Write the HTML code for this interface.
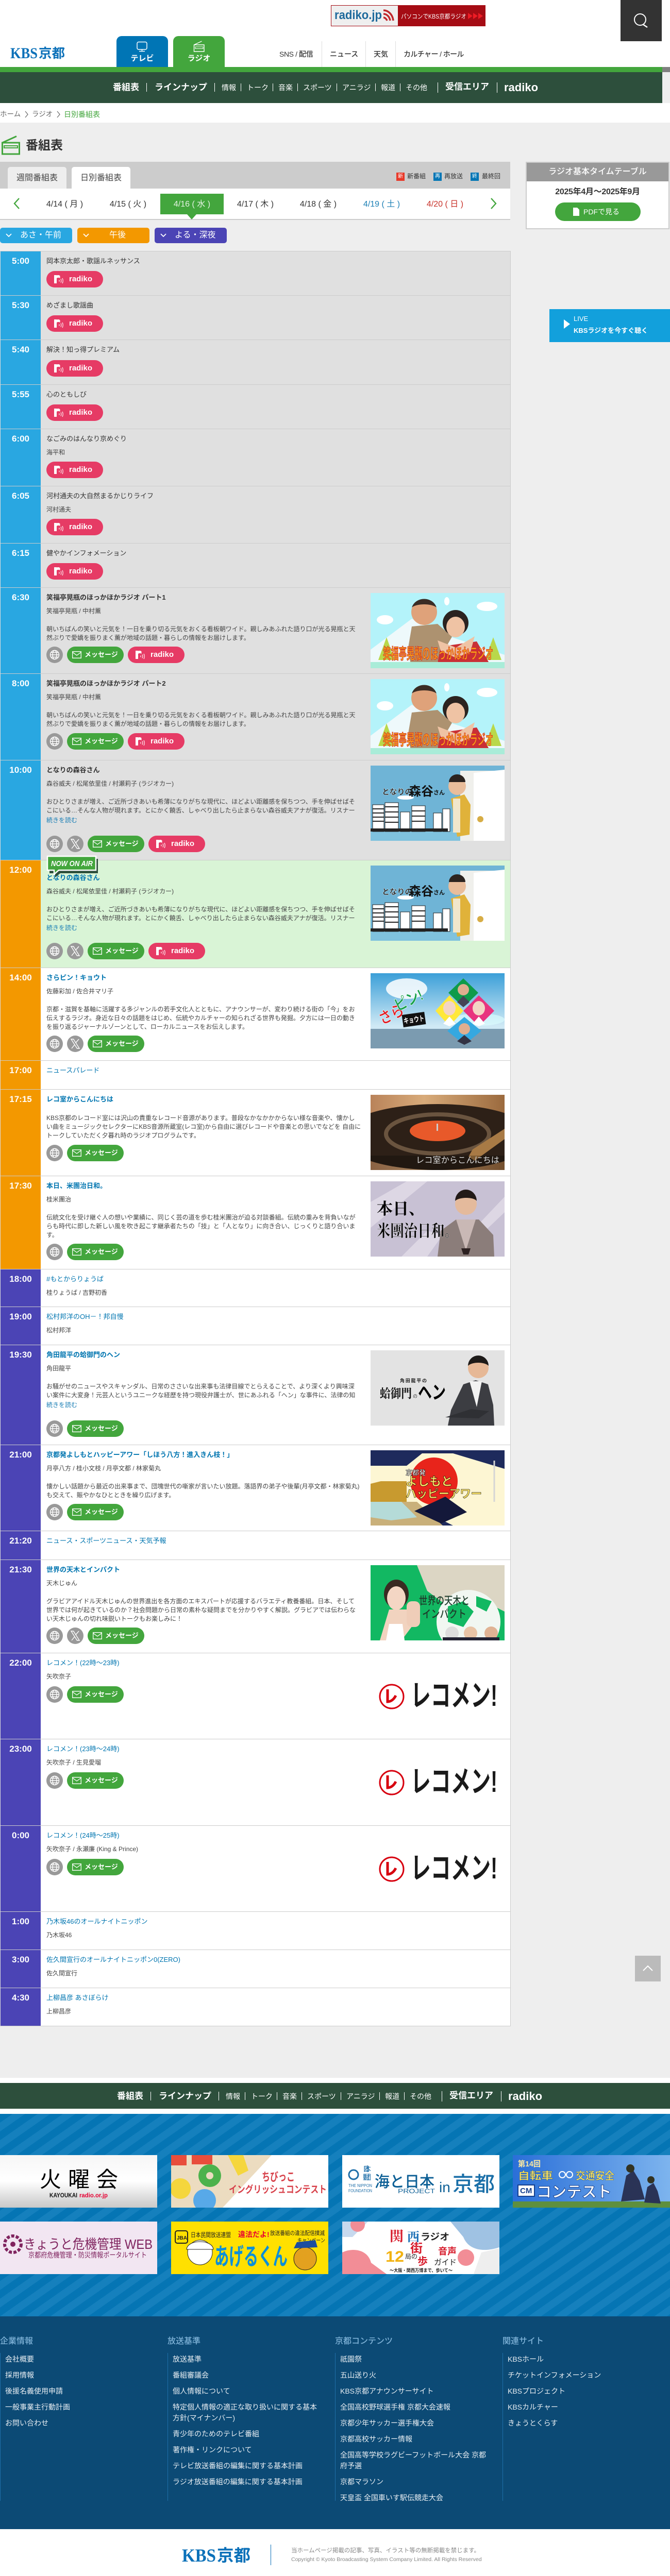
<!DOCTYPE html>
<html lang="ja"><head><meta charset="utf-8"><title>日別番組表 | KBS京都ラジオ</title>
<style>
*{box-sizing:border-box;margin:0;padding:0}
html,body{width:1300px;height:5009px;background:#fff}
body{position:relative;font-family:"Liberation Sans","Noto Sans CJK JP",sans-serif;color:#333;font-size:12px}
.a{position:absolute;white-space:nowrap}
.c{position:absolute;white-space:nowrap;text-align:center}
.sep{position:absolute;width:1px;background:#fff}
.r{position:absolute;left:0;width:991px;border-top:1px solid #ccc;border-right:1px solid #ccc;border-left:1px solid #ddd;background:#fff}
.g{background:#e0e0e0}.n{background:#d9f4d6}
.tm{position:absolute;left:0;top:0;bottom:0;width:78px;color:#fff;font-weight:700;font-size:17px;line-height:38px;text-align:center}
.mo1{background:#29a7e1}.mo2{background:#f39800}.mo3{background:#4b44b5}
.ti,.pe,.de,.mo{position:absolute;left:89px;white-space:nowrap}
.ti{top:10px;line-height:18px;font-size:13px;color:#0075b0}
.g .ti{color:#333}
.bd{font-weight:700}
.pe{top:36px;line-height:18px;font-size:12px;color:#444}
.de{line-height:17px;font-size:12px;color:#444}
.mo{line-height:18px;color:#1b7fb5;font-size:12px}
.bs{position:absolute;left:89px;display:flex;gap:8px}
.ic{width:32px;height:32px;border-radius:50%;background:#999;display:block}
.pl{width:110px;height:32px;border-radius:16px;position:relative;display:block;color:#fff}
.ms{background:#43a63d}.rd{background:#e63b65}
.ms svg{position:absolute;left:10px;top:8px}
.ms span{position:absolute;left:34px;top:0;line-height:31px;font-size:13px;font-weight:700}
.rd svg{position:absolute;left:14px;top:7px}
.rd span{position:absolute;left:44px;top:0;line-height:31px;font-size:15px;font-weight:700;font-family:"Liberation Sans",sans-serif}
.im{position:absolute;left:718px;top:10px;width:260px;height:146px;display:block}
.ban{position:absolute;width:305px;height:102px;display:block}
.fh{position:absolute;top:4534px;font-size:16px;line-height:22px;color:#7fb3d8;font-weight:500;white-space:nowrap}
.fl{position:absolute;top:4567px;height:287px;width:1px;background:#1f6fa8}
.fc{position:absolute;top:4567px;width:300px;padding-left:10px;color:#e8eef3;font-size:14px;line-height:21px}
.fc p{margin-bottom:10px}
svg text{font-family:"Liberation Sans","Noto Sans CJK JP",sans-serif}
</style></head><body>
<svg width="0" height="0" style="position:absolute;left:0;top:0"><defs>
<symbol id="gl" viewBox="0 0 32 32"><g fill="none" stroke="#fff" stroke-width="1.4"><circle cx="16" cy="16" r="8.5"/><ellipse cx="16" cy="16" rx="4" ry="8.5"/><path d="M7.5 16h17M8.8 11.5h14.4M8.8 20.500h14.400"/></g></symbol>
<symbol id="xx" viewBox="0 0 32 32"><path d="M8 7h4.500l11.500 18h-4.500zM23 7l-6.500 7.500M15 17.500L9 25" fill="none" stroke="#fff" stroke-width="1.400"/></symbol>
<symbol id="ml" viewBox="0 0 18 14"><path d="M.7.700h16.600v12.600H.7zM.7 2l8.300 6 8.300-6" fill="none" stroke="#fff" stroke-width="1.300"/></symbol>
<symbol id="ra" viewBox="0 0 20 18"><path d="M1 1h5v16H1zM6 1.500c3-1 5-.5 6.500 1v4.500c-2-1.500-4.500-1.500-6.500 0z" fill="#fff"/><path d="M11 10.500v3M14 8.500c1 2 1 5 0 7M17 7c1.500 3 1.500 7 0 10" fill="none" stroke="#fff" stroke-width="1.200"/></symbol>
</defs></svg>

<!-- header -->
<svg class="a" style="left:642px;top:10px" width="300" height="41"><rect width="300" height="41" fill="#a50c14"/><rect x="1" y="1" width="129" height="39" fill="#efefef"/><text x="7" y="27" font-size="24" font-weight="700" fill="#1f6a9c" textLength="92" lengthAdjust="spacingAndGlyphs">radiko.jp</text><path d="M102 10c10 0 18 9 19 20M102 17c7 0 12 6 13 13M102 24c3 0 6 3 7 6" fill="none" stroke="#c1272d" stroke-width="3.500"/><text x="136" y="26" font-size="12" fill="#fff" textLength="127" lengthAdjust="spacingAndGlyphs">パソコンでKBS京都ラジオ</text><path d="M266 15l9 6-9 6zM276 15l9 6-9 6zM286 15l9 6-9 6z" fill="#ee1c25"/></svg>
<div class="a" style="left:1204px;top:0;width:80px;height:80px;background:#333"><svg width="80" height="80"><circle cx="38" cy="38" r="11" fill="none" stroke="#fff" stroke-width="2"/><path d="M44 48l9 6" stroke="#fff" stroke-width="2.500" transform="translate(-1 -1)"/></svg></div>
<svg class="a" style="left:18px;top:86px" width="112" height="32"><text x="2" y="27" style="font-family:'Liberation Serif',serif" font-size="30" font-weight="700" fill="#0c71b9" textLength="53" lengthAdjust="spacingAndGlyphs">KBS</text><text x="57" y="26" font-size="25" font-weight="700" fill="#0c71b9" textLength="51" lengthAdjust="spacingAndGlyphs">京都</text></svg>
<div class="a" style="left:226px;top:70px;width:100px;height:60px;background:#0075b5;border-radius:10px 10px 0 0"></div>
<svg class="a" style="left:264px;top:80px" width="24" height="22"><rect x="2" y="1.500" width="19" height="14.500" rx="3" fill="none" stroke="#fff" stroke-width="1.500"/><path d="M11.500 16v3.500M6 19.500h11" stroke="#fff" stroke-width="1.500"/></svg>
<div class="c" style="left:226px;top:102px;width:100px;line-height:24px;font-size:15px;font-weight:700;color:#fff">テレビ</div>
<div class="a" style="left:336px;top:70px;width:100px;height:60px;background:#43a63d;border-radius:10px 10px 0 0"></div>
<svg class="a" style="left:374px;top:78px" width="24" height="24"><path d="M2.500 10h19.500v13H2.500zM2.500 10l15-7" fill="none" stroke="#fff" stroke-width="1.400" transform="translate(0 -1)"/><rect x="5" y="13" width="15" height="3.500" fill="none" stroke="#fff"/></svg>
<div class="c" style="left:336px;top:102px;width:100px;line-height:24px;font-size:15px;font-weight:700;color:#fff">ラジオ</div>
<div class="a" style="left:542px;top:94px;line-height:22px;font-size:14px;font-weight:500"><span style="letter-spacing:-.4px">SNS / 配信</span></div>
<div class="a" style="left:640px;top:94px;line-height:22px;font-size:14px;font-weight:500">ニュース</div>
<div class="a" style="left:725px;top:94px;line-height:22px;font-size:14px;font-weight:500">天気</div>
<div class="a" style="left:783px;top:94px;line-height:22px;font-size:14px;font-weight:500;letter-spacing:-.6px">カルチャー / ホール</div>
<div class="a" style="left:624px;top:80px;width:1px;height:50px;background:#ddd"></div>
<div class="a" style="left:709px;top:80px;width:1px;height:50px;background:#ddd"></div>
<div class="a" style="left:767px;top:80px;width:1px;height:50px;background:#ddd"></div>
<div class="a" style="left:0;top:130px;width:1285px;height:10px;background:#43a63d"></div>
<div class="a" style="left:1285px;top:130px;width:15px;height:10px;background:#808080"></div>
<div class="a" style="left:1285px;top:140px;width:15px;height:60px;background:#eee"></div>
<div class="a" style="left:0;top:140px;width:1285px;height:60px;background:#2d4f3c"></div>

<div class="a" style="left:219px;top:158px;line-height:24px;font-size:17px;font-weight:700;color:#fff">番組表</div>
<div class="sep" style="left:284px;top:161px;height:17px"></div>
<div class="a" style="left:300px;top:158px;line-height:24px;font-size:17px;font-weight:700;color:#fff">ラインナップ</div>
<div class="sep" style="left:416px;top:161px;height:17px"></div>
<div class="a" style="left:430px;top:160px;line-height:21px;font-size:14px;color:#fff">情報</div>
<div class="sep" style="left:467px;top:162px;height:15px"></div>
<div class="a" style="left:479px;top:160px;line-height:21px;font-size:14px;color:#fff">トーク</div>
<div class="sep" style="left:529px;top:162px;height:15px"></div>
<div class="a" style="left:540px;top:160px;line-height:21px;font-size:14px;color:#fff">音楽</div>
<div class="sep" style="left:577px;top:162px;height:15px"></div>
<div class="a" style="left:588px;top:160px;line-height:21px;font-size:14px;color:#fff">スポーツ</div>
<div class="sep" style="left:653px;top:162px;height:15px"></div>
<div class="a" style="left:664px;top:160px;line-height:21px;font-size:14px;color:#fff">アニラジ</div>
<div class="sep" style="left:728px;top:162px;height:15px"></div>
<div class="a" style="left:739px;top:160px;line-height:21px;font-size:14px;color:#fff">報道</div>
<div class="sep" style="left:776px;top:162px;height:15px"></div>
<div class="a" style="left:787px;top:160px;line-height:21px;font-size:14px;color:#fff">その他</div>
<div class="sep" style="left:849px;top:160px;height:20px"></div>
<div class="a" style="left:864px;top:157px;line-height:24px;font-size:17px;font-weight:700;color:#fff">受信エリア</div>
<div class="sep" style="left:964px;top:160px;height:20px"></div>
<div class="a" style="left:978px;top:154px;line-height:32px;font-size:22px;font-weight:700;color:#fff;font-family:'Liberation Sans',sans-serif">radiko</div>

<!-- breadcrumb -->
<div class="a" style="left:0;top:212px;line-height:20px;font-size:13.500px;color:#666">ホーム</div>
<svg class="a" style="left:47px;top:215px" width="10" height="14"><path d="M2 1l5 6-5 6" fill="none" stroke="#666" stroke-width="1.200"/></svg>
<div class="a" style="left:62px;top:212px;line-height:20px;font-size:13.500px;color:#666">ラジオ</div>
<svg class="a" style="left:109px;top:215px" width="10" height="14"><path d="M2 1l5 6-5 6" fill="none" stroke="#666" stroke-width="1.200"/></svg>
<div class="a" style="left:124px;top:212px;line-height:20px;font-size:14px;color:#43a63d">日別番組表</div>
<div class="a" style="left:0;top:238px;width:1300px;height:3795px;background:#eee"></div>

<svg class="a" style="left:2px;top:263px" width="38" height="38"><path d="M2.500 14h33v22h-33zM2.500 14L30 1.500" fill="none" stroke="#43a63d" stroke-width="3"/><path d="M6 20h26v4H6z" fill="none" stroke="#43a63d" stroke-width="2"/></svg>
<div class="a" style="left:50px;top:266px;line-height:34px;font-size:24px;font-weight:700;color:#333">番組表</div>

<!-- tabs -->
<div class="a" style="left:0;top:314px;width:990px;height:52px;background:#ccc"></div>
<div class="c" style="left:15px;top:324px;width:114px;height:42px;background:#eee;border-radius:5px 5px 0 0;line-height:44px;font-size:16px;color:#444">週間番組表</div>
<div class="c" style="left:139px;top:324px;width:114px;height:42px;background:#fff;border-radius:5px 5px 0 0;line-height:44px;font-size:16px;color:#444">日別番組表</div>
<div class="c" style="left:769px;top:335px;width:16px;height:16px;background:#e83828;color:#fff;font-size:10px;line-height:16px">新</div>
<div class="a" style="left:790px;top:332px;font-size:12px;line-height:20px">新番組</div>
<div class="c" style="left:841px;top:335px;width:16px;height:16px;background:#0075b5;color:#fff;font-size:10px;line-height:16px">再</div>
<div class="a" style="left:862px;top:332px;font-size:12px;line-height:20px">再放送</div>
<div class="c" style="left:913px;top:335px;width:16px;height:16px;background:#0075b5;color:#fff;font-size:10px;line-height:16px">終</div>
<div class="a" style="left:935px;top:332px;font-size:12px;line-height:20px">最終回</div>

<div class="a" style="left:0;top:366px;width:990px;background:#fff;border-bottom:2px solid #ccc;height:61px"></div>
<div class="a" style="left:311px;top:376px;width:123px;height:40px;background:#43a63d"></div>
<div class="a" style="left:363px;top:416px;width:0;height:0;border-left:9px solid transparent;border-right:9px solid transparent;border-top:10px solid #43a63d"></div>
<svg class="a" style="left:24px;top:382px" width="20" height="26"><path d="M13 3L4 13l9 10" fill="none" stroke="#43a63d" stroke-width="2.400"/></svg>
<svg class="a" style="left:947px;top:382px" width="20" height="26"><path d="M6 3l9 10-9 10" fill="none" stroke="#43a63d" stroke-width="2.400"/></svg>
<div class="c" style="left:64px;top:386px;width:123px;line-height:22px;font-size:16px">4/14 ( 月 )</div>
<div class="c" style="left:187px;top:386px;width:123px;line-height:22px;font-size:16px">4/15 ( 火 )</div>
<div class="c" style="left:311px;top:386px;width:123px;line-height:22px;font-size:16px;color:#e4f3e2">4/16 ( 水 )</div>
<div class="c" style="left:434px;top:386px;width:123px;line-height:22px;font-size:16px">4/17 ( 木 )</div>
<div class="c" style="left:556px;top:386px;width:123px;line-height:22px;font-size:16px">4/18 ( 金 )</div>
<div class="c" style="left:679px;top:386px;width:123px;line-height:22px;font-size:16px;color:#1b7fb5">4/19 ( 土 )</div>
<div class="c" style="left:802px;top:386px;width:123px;line-height:22px;font-size:16px;color:#c8322a">4/20 ( 日 )</div>

<!-- filter -->
<div class="a" style="left:0;top:442px;width:140px;height:30px;background:#29a7e1;border-radius:5px;color:#fff;font-size:16px;line-height:30px;padding-left:39px">あさ・午前<svg class="a" style="left:10px;top:10px" width="14" height="10"><path d="M2 2l5 5 5-5" fill="none" stroke="#fff" stroke-width="1.800"/></svg></div>
<div class="a" style="left:150px;top:442px;width:140px;height:30px;background:#f39800;border-radius:5px;color:#fff;font-size:16px;line-height:30px;padding-left:62px">午後<svg class="a" style="left:10px;top:10px" width="14" height="10"><path d="M2 2l5 5 5-5" fill="none" stroke="#fff" stroke-width="1.800"/></svg></div>
<div class="a" style="left:300px;top:442px;width:140px;height:30px;background:#4b44b5;border-radius:5px;color:#fff;font-size:16px;line-height:30px;padding-left:39px">よる・深夜<svg class="a" style="left:10px;top:10px" width="14" height="10"><path d="M2 2l5 5 5-5" fill="none" stroke="#fff" stroke-width="1.800"/></svg></div>

<!-- sidebar -->
<div class="a" style="left:1020px;top:314px;width:279px;height:131px;background:#fff;border:2px solid #ccc"></div>
<div class="c" style="left:1022px;top:316px;width:275px;height:36px;background:#999;color:#fff;font-size:16px;line-height:36px;font-weight:500">ラジオ基本タイムテーブル</div>
<div class="c" style="left:1022px;top:362px;width:275px;line-height:22px;font-size:16px;font-weight:700;letter-spacing:-.3px">2025年4月～2025年9月</div>
<div class="c" style="left:1077px;top:393px;width:166px;height:36px;background:#43a63d;border-radius:18px;color:#fff;font-size:14px;line-height:36px;padding-left:14px">PDFで見る<svg class="a" style="left:35px;top:10px" width="12" height="16"><path d="M0 0h8l4 4v12H0z" fill="#fff"/></svg></div>
<div class="a" style="left:1066px;top:600px;width:234px;height:64px;background:#12a0dc;color:#fff"><div class="a" style="left:47px;top:11px;font-size:13px;line-height:16px">LIVE</div><div class="a" style="left:47px;top:33px;font-size:13px;line-height:18px;font-weight:700">KBSラジオを今すぐ聴く</div><svg class="a" style="left:26px;top:18px" width="16" height="22"><path d="M2 2l12 9-12 9z" fill="#fff"/></svg></div>

<!-- schedule -->
<div class="r g" style="top:487px;height:87px"><div class="tm mo1">5:00</div><div class="ti">岡本京太郎・歌謡ルネッサンス</div><div class="bs" style="top:38px"><span class="pl rd"><svg width="20" height="18"><use href="#ra"/></svg><span>radiko</span></span></div></div>
<div class="r g" style="top:573px;height:87px"><div class="tm mo1">5:30</div><div class="ti">めざまし歌謡曲</div><div class="bs" style="top:38px"><span class="pl rd"><svg width="20" height="18"><use href="#ra"/></svg><span>radiko</span></span></div></div>
<div class="r g" style="top:659px;height:88px"><div class="tm mo1">5:40</div><div class="ti">解決！知っ得プレミアム</div><div class="bs" style="top:39px"><span class="pl rd"><svg width="20" height="18"><use href="#ra"/></svg><span>radiko</span></span></div></div>
<div class="r g" style="top:746px;height:87px"><div class="tm mo1">5:55</div><div class="ti">心のともしび</div><div class="bs" style="top:38px"><span class="pl rd"><svg width="20" height="18"><use href="#ra"/></svg><span>radiko</span></span></div></div>
<div class="r g" style="top:832px;height:112px"><div class="tm mo1">6:00</div><div class="ti">なごみのはんなり京めぐり</div><div class="pe">海平和</div><div class="bs" style="top:63px"><span class="pl rd"><svg width="20" height="18"><use href="#ra"/></svg><span>radiko</span></span></div></div>
<div class="r g" style="top:943px;height:112px"><div class="tm mo1">6:05</div><div class="ti">河村通夫の大自然まるかじりライフ</div><div class="pe">河村通夫</div><div class="bs" style="top:63px"><span class="pl rd"><svg width="20" height="18"><use href="#ra"/></svg><span>radiko</span></span></div></div>
<div class="r g" style="top:1054px;height:87px"><div class="tm mo1">6:15</div><div class="ti">健やかインフォメーション</div><div class="bs" style="top:38px"><span class="pl rd"><svg width="20" height="18"><use href="#ra"/></svg><span>radiko</span></span></div></div>

<div class="r g" style="top:1140px;height:168px"><div class="tm mo1">6:30</div><div class="ti bd">笑福亭晃瓶のほっかほかラジオ パート1</div><div class="pe">笑福亭晃瓶 / 中村薫</div><div class="de" style="top:72px">朝いちばんの笑いと元気を！一日を乗り切る元気をおくる看板朝ワイド。親しみあふれた語り口が光る晃瓶と天<br>然ぶりで愛嬌を振りまく薫が地域の話題・暮らしの情報をお届けします。</div><div class="bs" style="top:114px"><span class="ic"><svg width="32" height="32"><use href="#gl"/></svg></span><span class="pl ms"><svg width="18" height="14" style="top:9px"><use href="#ml"/></svg><span>メッセージ</span></span><span class="pl rd"><svg width="20" height="18"><use href="#ra"/></svg><span>radiko</span></span></div>
<svg class="im" viewBox="0 0 260 146"><rect width="260" height="146" fill="#b4f3fa"/><path d="M0 110L80 50l60 30 120 40v26H0z" fill="#eef9fb"/><ellipse cx="28" cy="52" rx="16" ry="9" fill="#fff"/><ellipse cx="226" cy="26" rx="20" ry="9" fill="#fff"/><ellipse cx="148" cy="16" rx="5" ry="8" fill="#fff"/><path d="M15 130l16-44 16 44zM222 130l16-44 16 44z" fill="#b9d84a"/><path d="M72 112l8-47 50-5 28 25-30 52H78z" fill="#ad9270"/><circle cx="104" cy="37" r="25" fill="#dfa27a"/><path d="M80 28a25 23 0 0 1 48 0c-10-8-38-8-48 0z" fill="#3a2c25"/><path d="M128 146l8-42 70-10 30 52z" fill="#c93036"/><circle cx="165" cy="58" r="25" fill="#2b2320"/><ellipse cx="165" cy="66" rx="18" ry="20" fill="#efc3a4"/><path d="M130 92l36 14 36-22-8 30-28 12-30-14z" fill="#efc3a4"/><path d="M0 146v-12h260v12z" fill="#a9ecd8"/><text x="24" y="128" font-size="29" font-weight="700" fill="#f4a11d" stroke="#d3261e" stroke-width="1" textLength="214" lengthAdjust="spacingAndGlyphs">笑福亭晃瓶のほっかほかラジオ</text></svg></div>

<div class="r g" style="top:1307px;height:169px"><div class="tm mo1">8:00</div><div class="ti bd">笑福亭晃瓶のほっかほかラジオ パート2</div><div class="pe">笑福亭晃瓶 / 中村薫</div><div class="de" style="top:72px">朝いちばんの笑いと元気を！一日を乗り切る元気をおくる看板朝ワイド。親しみあふれた語り口が光る晃瓶と天<br>然ぶりで愛嬌を振りまく薫が地域の話題・暮らしの情報をお届けします。</div><div class="bs" style="top:115px"><span class="ic"><svg width="32" height="32"><use href="#gl"/></svg></span><span class="pl ms"><svg width="18" height="14" style="top:9px"><use href="#ml"/></svg><span>メッセージ</span></span><span class="pl rd"><svg width="20" height="18"><use href="#ra"/></svg><span>radiko</span></span></div>
<svg class="im" viewBox="0 0 260 146"><rect width="260" height="146" fill="#b4f3fa"/><path d="M0 110L80 50l60 30 120 40v26H0z" fill="#eef9fb"/><ellipse cx="28" cy="52" rx="16" ry="9" fill="#fff"/><ellipse cx="226" cy="26" rx="20" ry="9" fill="#fff"/><ellipse cx="148" cy="16" rx="5" ry="8" fill="#fff"/><path d="M15 130l16-44 16 44zM222 130l16-44 16 44z" fill="#b9d84a"/><path d="M72 112l8-47 50-5 28 25-30 52H78z" fill="#ad9270"/><circle cx="104" cy="37" r="25" fill="#dfa27a"/><path d="M80 28a25 23 0 0 1 48 0c-10-8-38-8-48 0z" fill="#3a2c25"/><path d="M128 146l8-42 70-10 30 52z" fill="#c93036"/><circle cx="165" cy="58" r="25" fill="#2b2320"/><ellipse cx="165" cy="66" rx="18" ry="20" fill="#efc3a4"/><path d="M130 92l36 14 36-22-8 30-28 12-30-14z" fill="#efc3a4"/><path d="M0 146v-12h260v12z" fill="#a9ecd8"/><text x="24" y="128" font-size="29" font-weight="700" fill="#f4a11d" stroke="#d3261e" stroke-width="1" textLength="214" lengthAdjust="spacingAndGlyphs">笑福亭晃瓶のほっかほかラジオ</text></svg></div>

<div class="r g" style="top:1475px;height:195px"><div class="tm mo1">10:00</div><div class="ti bd">となりの森谷さん</div><div class="pe">森谷威夫 / 松尾依里佳 / 村瀬莉子 (ラジオカー)</div><div class="de" style="top:72px">おひとりさまが増え、ご近所づきあいも希薄になりがちな現代に、ほどよい距離感を保ちつつ、手を伸ばせばそ<br>こにいる…そんな人物が現れます。とにかく饒舌、しゃべり出したら止まらない森谷威夫アナが復活。リスナー</div><div class="mo" style="top:107px">続きを読む</div><div class="bs" style="top:146px"><span class="ic"><svg width="32" height="32"><use href="#gl"/></svg></span><span class="ic"><svg width="32" height="32"><use href="#xx"/></svg></span><span class="pl ms"><svg width="18" height="14" style="top:9px"><use href="#ml"/></svg><span>メッセージ</span></span><span class="pl rd"><svg width="20" height="18"><use href="#ra"/></svg><span>radiko</span></span></div>
<svg class="im" viewBox="0 0 260 146"><rect width="260" height="146" fill="#6fb4d6"/><rect y="128" width="260" height="18" fill="#7fc2de"/><rect x="174" y="10" width="86" height="136" fill="#f0f0ec"/><path d="M200 14l60-6v138h-60z" fill="#fff"/><g fill="#fff" stroke="#222"><rect x="4" y="76" width="22" height="52"/><rect x="28" y="72" width="26" height="56"/><rect x="58" y="90" width="18" height="38"/><rect x="80" y="78" width="26" height="50"/><rect x="122" y="92" width="16" height="36"/><rect x="140" y="84" width="14" height="44"/></g><path d="M4 84h22M4 92h22M4 100h22M4 108h22M28 80h26M28 90h26M28 100h26M28 110h26M80 88h26M80 98h26M80 108h26" stroke="#222" stroke-width="2"/><path d="M0 128h150v-6H0z" fill="#222"/><ellipse cx="68" cy="62" rx="16" ry="4" fill="#fff"/><path d="M156 64l26-8 12 20-2 58-24 4z" fill="#e0b23a"/><circle cx="168" cy="40" r="17" fill="#e9bd9b"/><path d="M152 32a16 15 0 0 1 32 0z" fill="#2b2320"/><rect x="160" y="64" width="14" height="66" fill="#f1e6cb"/><circle cx="213" cy="104" r="6" fill="#d7ad45"/><text x="22" y="56" font-size="15" font-weight="700" fill="#111" stroke="#fff" stroke-width=".4">となりの</text><text x="74" y="58" font-size="24" font-weight="700" fill="#111">森谷</text><text x="122" y="56" font-size="11" font-weight="700" fill="#111">さん</text></svg></div>

<div class="r n" style="top:1669px;height:210px"><div class="tm mo2">12:00</div><div class="ti bd" style="top:25px">となりの森谷さん</div><div class="pe" style="top:51px">森谷威夫 / 松尾依里佳 / 村瀬莉子 (ラジオカー)</div><div class="de" style="top:87px">おひとりさまが増え、ご近所づきあいも希薄になりがちな現代に、ほどよい距離感を保ちつつ、手を伸ばせばそ<br>こにいる…そんな人物が現れます。とにかく饒舌、しゃべり出したら止まらない森谷威夫アナが復活。リスナー</div><div class="mo" style="top:122px">続きを読む</div><div class="bs" style="top:160px"><span class="ic"><svg width="32" height="32"><use href="#gl"/></svg></span><span class="ic"><svg width="32" height="32"><use href="#xx"/></svg></span><span class="pl ms"><svg width="18" height="14" style="top:9px"><use href="#ml"/></svg><span>メッセージ</span></span><span class="pl rd"><svg width="20" height="18"><use href="#ra"/></svg><span>radiko</span></span></div>
<svg class="im" viewBox="0 0 260 146"><rect width="260" height="146" fill="#6fb4d6"/><rect y="128" width="260" height="18" fill="#7fc2de"/><rect x="174" y="10" width="86" height="136" fill="#f0f0ec"/><path d="M200 14l60-6v138h-60z" fill="#fff"/><g fill="#fff" stroke="#222"><rect x="4" y="76" width="22" height="52"/><rect x="28" y="72" width="26" height="56"/><rect x="58" y="90" width="18" height="38"/><rect x="80" y="78" width="26" height="50"/><rect x="122" y="92" width="16" height="36"/><rect x="140" y="84" width="14" height="44"/></g><path d="M4 84h22M4 92h22M4 100h22M4 108h22M28 80h26M28 90h26M28 100h26M28 110h26M80 88h26M80 98h26M80 108h26" stroke="#222" stroke-width="2"/><path d="M0 128h150v-6H0z" fill="#222"/><ellipse cx="68" cy="62" rx="16" ry="4" fill="#fff"/><path d="M156 64l26-8 12 20-2 58-24 4z" fill="#e0b23a"/><circle cx="168" cy="40" r="17" fill="#e9bd9b"/><path d="M152 32a16 15 0 0 1 32 0z" fill="#2b2320"/><rect x="160" y="64" width="14" height="66" fill="#f1e6cb"/><circle cx="213" cy="104" r="6" fill="#d7ad45"/><text x="22" y="56" font-size="15" font-weight="700" fill="#111" stroke="#fff" stroke-width=".4">となりの</text><text x="74" y="58" font-size="24" font-weight="700" fill="#111">森谷</text><text x="122" y="56" font-size="11" font-weight="700" fill="#111">さん</text></svg></div>

<div class="r" style="top:1878px;height:181px"><div class="tm mo2">14:00</div><div class="ti bd">さらピン！キョウト</div><div class="pe">佐藤彩加 / 佐合井マリ子</div><div class="de" style="top:72px">京都・滋賀を基軸に活躍する多ジャンルの若手文化人とともに、アナウンサーが、変わり続ける街の「今」をお<br>伝えするラジオ。身近な日々の話題をはじめ、伝統やカルチャーの知られざる世界も発掘。夕方には一日の動き<br>を振り返るジャーナルゾーンとして、ローカルニュースをお伝えします。</div><div class="bs" style="top:131px"><span class="ic"><svg width="32" height="32"><use href="#gl"/></svg></span><span class="ic"><svg width="32" height="32"><use href="#xx"/></svg></span><span class="pl ms"><svg width="18" height="14" style="top:9px"><use href="#ml"/></svg><span>メッセージ</span></span></div>
<svg class="im" viewBox="0 0 260 146"><defs><linearGradient id="s3" x1="0" y1="0" x2="0" y2="1"><stop offset="0" stop-color="#3b9fd8"/><stop offset=".7" stop-color="#cfe9f5"/></linearGradient></defs><rect width="260" height="146" fill="url(#s3)"/><ellipse cx="70" cy="30" rx="40" ry="20" fill="#fff" opacity=".85"/><ellipse cx="210" cy="90" rx="50" ry="12" fill="#dff" opacity=".6"/><rect y="108" width="260" height="38" fill="#7b9bb0"/><path d="M180 10l29 28-29 28-29-28z" fill="#0e9b4a"/><path d="M153 43l27 30-27 30-27-30z" fill="#ffe83a"/><path d="M210 43l30 30-30 30-30-30z" fill="#e8347f"/><path d="M182 85l33 27-33 27-33-27z" fill="#35a8e0"/><ellipse cx="153" cy="68" rx="12" ry="14" fill="#f3d5c5"/><path d="M141 98l12-14 12 14-12 5z" fill="#fff"/><ellipse cx="210" cy="68" rx="12" ry="14" fill="#f3d5c5"/><path d="M198 98l12-14 12 14-12 5z" fill="#fff"/><circle cx="180" cy="32" r="11" fill="#dfae8f"/><path d="M168 56l12-12 12 12-12 10z" fill="#445"/><circle cx="182" cy="108" r="11" fill="#dfae8f"/><path d="M168 132l14-12 14 12-14 7z" fill="#334"/><text x="22" y="100" font-size="30" font-weight="700" fill="#e01f26" stroke="#fff" stroke-width=".7" transform="rotate(-25 22 100)" textLength="50" lengthAdjust="spacingAndGlyphs">さら</text><text x="52" y="74" font-size="30" font-weight="700" fill="#18a14b" stroke="#fff" stroke-width=".7" transform="rotate(-25 52 74)" textLength="58" lengthAdjust="spacingAndGlyphs">ピン!</text><rect x="62" y="78" width="44" height="24" fill="#111" transform="rotate(-8 84 90)"/><text x="64" y="95" font-size="14" font-weight="700" fill="#fff" textLength="40" lengthAdjust="spacingAndGlyphs" transform="rotate(-8 84 90)">キョウト</text></svg></div>

<div class="r" style="top:2058px;height:57px"><div class="tm mo2">17:00</div><div class="ti">ニュースパレード</div></div>

<div class="r" style="top:2114px;height:169px"><div class="tm mo2">17:15</div><div class="ti bd">レコ室からこんにちは</div><div class="de" style="top:47px">KBS京都のレコード室には沢山の貴重なレコード音源があります。普段なかなかかからない様な音楽や、懐かし<br>い曲をミュージックセレクターにKBS音源所蔵室(レコ室)から自由に選びレコードや音楽との思いでなどを 自由に<br>トークしていただく夕暮れ時のラジオプログラムです。</div><div class="bs" style="top:107px"><span class="ic"><svg width="32" height="32"><use href="#gl"/></svg></span><span class="pl ms"><svg width="18" height="14" style="top:9px"><use href="#ml"/></svg><span>メッセージ</span></span></div>
<svg class="im" viewBox="0 0 260 146"><defs><linearGradient id="s4" x1="0" y1="0" x2="1" y2="0"><stop offset="0" stop-color="#b9835a"/><stop offset=".4" stop-color="#d8ab7a"/><stop offset="1" stop-color="#9b6a3e"/></linearGradient></defs><rect width="260" height="146" fill="url(#s4)"/><ellipse cx="130" cy="82" rx="190" ry="64" fill="#2d2017"/><ellipse cx="130" cy="76" rx="100" ry="38" fill="none" stroke="#6a543f" stroke-width="8"/><ellipse cx="130" cy="70" rx="54" ry="20" fill="#e8592a"/><rect x="128" y="56" width="3" height="14" fill="#ccc"/><path d="M260 66l-62 40-8 14 12 8 58-42z" fill="#a87a45"/><rect y="118" width="260" height="28" fill="#000" opacity=".25"/><text x="88" y="132" font-size="16" fill="#ddd" textLength="162" lengthAdjust="spacingAndGlyphs">レコ室からこんにちは</text></svg></div>

<div class="r" style="top:2282px;height:182px"><div class="tm mo2">17:30</div><div class="ti bd">本日、米團治日和。</div><div class="pe">桂米團治</div><div class="de" style="top:72px">伝統文化を受け継ぐ人の想いや業績に、同じく芸の道を歩む桂米團治が迫る対談番組。伝統の重みを背負いなが<br>らも時代に即した新しい風を吹き起こす継承者たちの「技」と「人となり」に向き合い、じっくりと語り合いま<br>す。</div><div class="bs" style="top:131px"><span class="ic"><svg width="32" height="32"><use href="#gl"/></svg></span><span class="pl ms"><svg width="18" height="14" style="top:9px"><use href="#ml"/></svg><span>メッセージ</span></span></div>
<svg class="im" viewBox="0 0 260 146"><rect width="260" height="146" fill="#c8c1d4"/><path d="M0 40l70-40h40L0 90zM150 146L260 30v30l-90 86zM60 146l50-50 30 8-30 42z" fill="#ddd7e4"/><path d="M130 146l6-50 30-22h44l28 30 2 42z" fill="#8b7d7a"/><path d="M166 74l19 60 19-60z" fill="#c9b8b5"/><path d="M176 130l18 0-4 12-10 0z" fill="#2c2020"/><circle cx="185" cy="44" r="21" fill="#e4ba9c"/><path d="M164 38a21 22 0 0 1 42 0c-6-8-34-8-42 0z" fill="#221a17"/><text x="12" y="64" font-size="31" font-weight="700" fill="#000" style="font-family:'Noto Serif CJK SC',serif">本日、</text><text x="12" y="107" font-size="32" font-weight="700" fill="#000" stroke="#fff" stroke-width=".3" textLength="158" lengthAdjust="spacingAndGlyphs" style="font-family:'Noto Serif CJK SC',serif">米團治日和。</text></svg></div>

<div class="r" style="top:2463px;height:74px"><div class="tm mo3">18:00</div><div class="ti">#もとからりょうば</div><div class="pe">桂りょうば / 吉野初香</div></div>
<div class="r" style="top:2536px;height:75px"><div class="tm mo3">19:00</div><div class="ti">松村邦洋のOH－！邦自慢</div><div class="pe">松村邦洋</div></div>

<div class="r" style="top:2610px;height:195px"><div class="tm mo3">19:30</div><div class="ti bd">角田龍平の蛤御門のヘン</div><div class="pe">角田龍平</div><div class="de" style="top:72px">お騒がせのニュースやスキャンダル、日常のささいな出来事も法律目線でとらえることで、より深くより興味深<br>い案件に大変身！元芸人というユニークな経歴を持つ現役弁護士が、世にあふれる「ヘン」な事件に、法律の知</div><div class="mo" style="top:107px">続きを読む</div><div class="bs" style="top:146px"><span class="ic"><svg width="32" height="32"><use href="#gl"/></svg></span><span class="pl ms"><svg width="18" height="14" style="top:9px"><use href="#ml"/></svg><span>メッセージ</span></span></div>
<svg class="im" viewBox="0 0 260 146"><rect width="260" height="146" fill="#e3e3e3"/><path d="M150 146l6-30 24-50 24-8 24 8 10 40 2 40z" fill="#3c3d42"/><path d="M192 60h24l-10 50z" fill="#f2f2f2"/><circle cx="209" cy="34" r="20" fill="#e6b896"/><path d="M189 30a20 20 0 0 1 40 0c-8-8-32-8-40 0z" fill="#1d1a18"/><path d="M145 130l50-16 35 4-20 14z" fill="#2f3034"/><text x="57" y="62" font-size="9" font-weight="700" fill="#222" textLength="52">角田龍平の</text><text x="18" y="92" font-size="24" font-weight="700" fill="#111" style="font-family:'Noto Serif CJK SC',serif" textLength="62" lengthAdjust="spacingAndGlyphs">蛤御門</text><text x="82" y="92" font-size="9" fill="#333">の</text><text x="92" y="94" font-size="36" font-weight="700" fill="#000" textLength="54" lengthAdjust="spacingAndGlyphs">ヘン</text></svg></div>

<div class="r" style="top:2804px;height:168px"><div class="tm mo3">21:00</div><div class="ti bd">京都発よしもとハッピーアワー「しほう八方！進入きん枝！」</div><div class="pe">月亭八方 / 桂小文枝 / 月亭文都 / 林家菊丸</div><div class="de" style="top:72px">懐かしい話題から最近の出来事まで、団塊世代の噺家が言いたい放題。落語界の弟子や後輩(月亭文都・林家菊丸)<br>も交えて、賑やかなひとときを繰り広げます。</div><div class="bs" style="top:114px"><span class="ic"><svg width="32" height="32"><use href="#gl"/></svg></span><span class="pl ms"><svg width="18" height="14" style="top:9px"><use href="#ml"/></svg><span>メッセージ</span></span></div>
<svg class="im" viewBox="0 0 260 146"><rect width="260" height="146" fill="#1e2a5c"/><path d="M0 30h70l30-24h60l100 30v110H160l-40-20H0z" fill="#fdf6d3"/><path d="M0 100h90l50 46H0z" fill="#c9b07a"/><path d="M0 100h60l30 30-50 6-40-6z" fill="#b5dbd8"/><circle cx="123" cy="60" r="46" fill="#e8241b"/><path d="M85 118l60-28 42 30-50 22z" fill="#14183a"/><path d="M20 60h50v40H0V65z" fill="#c89a2f"/><path d="M205 146l25-26 30 26z" fill="#fdf6d3"/><path d="M240 20v80" stroke="#d5d5d5" stroke-width="3"/><text x="68" y="48" font-size="13" font-weight="700" fill="#fff" stroke="#000" stroke-width=".5">京都発</text><text x="68" y="68" font-size="23" font-weight="700" fill="#ffe666" stroke="#000" stroke-width=".6">よしもと</text><text x="68" y="92" font-size="22" font-weight="700" fill="#ffe666" stroke="#000" stroke-width=".6" textLength="148" lengthAdjust="spacingAndGlyphs">ハッピーアワー</text></svg></div>

<div class="r" style="top:2971px;height:57px"><div class="tm mo3">21:20</div><div class="ti">ニュース・スポーツニュース・天気予報</div></div>

<div class="r" style="top:3027px;height:182px"><div class="tm mo3">21:30</div><div class="ti bd">世界の天木とインパクト</div><div class="pe">天木じゅん</div><div class="de" style="top:72px">グラビアアイドル天木じゅんの世界進出を各方面のエキスパートが応援するバラエティ教養番組。日本、そして<br>世界では何が起きているのか？社会問題から日常の素朴な疑問までを分かりやすく解説。グラビアでは伝わらな<br>い天木じゅんの切れ味鋭いトークもお楽しみに！</div><div class="bs" style="top:131px"><span class="ic"><svg width="32" height="32"><use href="#gl"/></svg></span><span class="ic"><svg width="32" height="32"><use href="#xx"/></svg></span><span class="pl ms"><svg width="18" height="14" style="top:9px"><use href="#ml"/></svg><span>メッセージ</span></span></div>
<svg class="im" viewBox="0 0 260 146"><rect width="260" height="146" fill="#12b862"/><path d="M90 0h170v90l-60-30-50 20-40-30z" fill="#dcd6c4"/><circle cx="190" cy="110" r="62" fill="#f1f7f2"/><path d="M150 80l30-10 20 20-20 30-30-10zM205 60l30 10-10 20-20-10z" fill="#12b862"/><path d="M18 146l18-60 34 0 20 20-30 40z" fill="#f1d3bf"/><path d="M30 146l6-32h26l4 32z" fill="#fff"/><ellipse cx="50" cy="56" rx="24" ry="28" fill="#3a2a22"/><ellipse cx="50" cy="64" rx="18" ry="23" fill="#f4d6c4"/><rect x="70" y="70" width="26" height="50" rx="10" fill="#efcdb8"/><circle cx="158" cy="132" r="13" fill="#ddd"/><circle cx="194" cy="132" r="13" fill="#e9c4a6"/><circle cx="234" cy="132" r="13" fill="#e0b394"/><path d="M140 146h110v-6H140z" fill="#223"/><text x="94" y="76" font-size="21" font-weight="500" fill="#1e3a2a" textLength="98" lengthAdjust="spacingAndGlyphs">世界の天木と</text><text x="100" y="102" font-size="21" font-weight="500" fill="#1e3a2a" textLength="86" lengthAdjust="spacingAndGlyphs">インパクト</text></svg></div>

<div class="r" style="top:3208px;height:168px"><div class="tm mo3">22:00</div><div class="ti">レコメン！(22時～23時)</div><div class="pe">矢吹奈子</div><div class="bs" style="top:64px"><span class="ic"><svg width="32" height="32"><use href="#gl"/></svg></span><span class="pl ms"><svg width="18" height="14" style="top:9px"><use href="#ml"/></svg><span>メッセージ</span></span></div>
<svg class="im" viewBox="0 0 260 146"><circle cx="41" cy="74" r="23" fill="#fff" stroke="#d7000f" stroke-width="3"/><path d="M33 60v24c6 0 12-4 16-12" fill="none" stroke="#d7000f" stroke-width="5"/><text x="78" y="92" font-size="58" font-weight="700" fill="#1a1a1a" textLength="168" lengthAdjust="spacingAndGlyphs">レコメン!</text></svg></div>

<div class="r" style="top:3375px;height:169px"><div class="tm mo3">23:00</div><div class="ti">レコメン！(23時～24時)</div><div class="pe">矢吹奈子 / 生見愛瑠</div><div class="bs" style="top:64px"><span class="ic"><svg width="32" height="32"><use href="#gl"/></svg></span><span class="pl ms"><svg width="18" height="14" style="top:9px"><use href="#ml"/></svg><span>メッセージ</span></span></div>
<svg class="im" viewBox="0 0 260 146"><circle cx="41" cy="74" r="23" fill="#fff" stroke="#d7000f" stroke-width="3"/><path d="M33 60v24c6 0 12-4 16-12" fill="none" stroke="#d7000f" stroke-width="5"/><text x="78" y="92" font-size="58" font-weight="700" fill="#1a1a1a" textLength="168" lengthAdjust="spacingAndGlyphs">レコメン!</text></svg></div>

<div class="r" style="top:3543px;height:168px"><div class="tm mo3">0:00</div><div class="ti">レコメン！(24時～25時)</div><div class="pe">矢吹奈子 / 永瀬廉 (King &amp; Prince)</div><div class="bs" style="top:64px"><span class="ic"><svg width="32" height="32"><use href="#gl"/></svg></span><span class="pl ms"><svg width="18" height="14" style="top:9px"><use href="#ml"/></svg><span>メッセージ</span></span></div>
<svg class="im" viewBox="0 0 260 146"><circle cx="41" cy="74" r="23" fill="#fff" stroke="#d7000f" stroke-width="3"/><path d="M33 60v24c6 0 12-4 16-12" fill="none" stroke="#d7000f" stroke-width="5"/><text x="78" y="92" font-size="58" font-weight="700" fill="#1a1a1a" textLength="168" lengthAdjust="spacingAndGlyphs">レコメン!</text></svg></div>

<div class="r" style="top:3710px;height:75px"><div class="tm mo3">1:00</div><div class="ti">乃木坂46のオールナイトニッポン</div><div class="pe">乃木坂46</div></div>
<div class="r" style="top:3784px;height:75px"><div class="tm mo3">3:00</div><div class="ti">佐久間宣行のオールナイトニッポン0(ZERO)</div><div class="pe">佐久間宣行</div></div>
<div class="r" style="top:3858px;height:75px;border-bottom:1px solid #ccc"><div class="tm mo3">4:30</div><div class="ti">上柳昌彦 あさぼらけ</div><div class="pe">上柳昌彦</div></div>

<!-- NOW ON AIR -->
<svg class="a" style="left:90px;top:1660px" width="104" height="42"><path d="M3 4h94v28H24l-10 8V32H3z" fill="#2d4f3c" transform="translate(3 3)"/><path d="M2 2h94v27H24l-9 8v-8H2z" fill="#43a63d" stroke="#fff" stroke-width="2.500"/><text x="9" y="21" font-size="15" font-weight="700" font-style="italic" fill="#fff" textLength="81" lengthAdjust="spacingAndGlyphs">NOW ON AIR</text></svg>

<!-- page top -->
<div class="a" style="left:1232px;top:3796px;width:50px;height:50px;background:#bbb"><svg width="50" height="50"><path d="M16 29l9-9 9 9" fill="none" stroke="#fff" stroke-width="2"/></svg></div>

<!-- footer nav -->
<div class="a" style="left:0;top:4033px;width:1300px;height:10px;background:#fff"></div>
<div class="a" style="left:0;top:4043px;width:1300px;height:50px;background:#2d4f3c"></div>
<div class="a" style="left:227px;top:4057px;line-height:24px;font-size:17px;font-weight:700;color:#fff">番組表</div>
<div class="sep" style="left:292px;top:4060px;height:17px"></div>
<div class="a" style="left:308px;top:4057px;line-height:24px;font-size:17px;font-weight:700;color:#fff">ラインナップ</div>
<div class="sep" style="left:424px;top:4060px;height:17px"></div>
<div class="a" style="left:438px;top:4059px;line-height:21px;font-size:14px;color:#fff">情報</div>
<div class="sep" style="left:475px;top:4061px;height:15px"></div>
<div class="a" style="left:487px;top:4059px;line-height:21px;font-size:14px;color:#fff">トーク</div>
<div class="sep" style="left:537px;top:4061px;height:15px"></div>
<div class="a" style="left:548px;top:4059px;line-height:21px;font-size:14px;color:#fff">音楽</div>
<div class="sep" style="left:585px;top:4061px;height:15px"></div>
<div class="a" style="left:596px;top:4059px;line-height:21px;font-size:14px;color:#fff">スポーツ</div>
<div class="sep" style="left:661px;top:4061px;height:15px"></div>
<div class="a" style="left:672px;top:4059px;line-height:21px;font-size:14px;color:#fff">アニラジ</div>
<div class="sep" style="left:736px;top:4061px;height:15px"></div>
<div class="a" style="left:747px;top:4059px;line-height:21px;font-size:14px;color:#fff">報道</div>
<div class="sep" style="left:784px;top:4061px;height:15px"></div>
<div class="a" style="left:795px;top:4059px;line-height:21px;font-size:14px;color:#fff">その他</div>
<div class="sep" style="left:857px;top:4059px;height:20px"></div>
<div class="a" style="left:872px;top:4056px;line-height:24px;font-size:17px;font-weight:700;color:#fff">受信エリア</div>
<div class="sep" style="left:972px;top:4059px;height:20px"></div>
<div class="a" style="left:986px;top:4053px;line-height:32px;font-size:22px;font-weight:700;color:#fff;font-family:'Liberation Sans',sans-serif">radiko</div>
<div class="a" style="left:0;top:4093px;width:1300px;height:10px;background:#fff"></div>

<!-- banners -->
<div class="a" style="left:0;top:4103px;width:1300px;height:393px;background:repeating-linear-gradient(145deg,#0575b4 0 14px,#1580bd 14px 28px)"></div>

<svg class="ban" style="left:0;top:4183px" viewBox="0 0 305 102"><defs><linearGradient id="b1" x1="0" y1="0" x2="0" y2="1"><stop offset="0" stop-color="#f6f6f6"/><stop offset=".5" stop-color="#fff"/><stop offset="1" stop-color="#c8c8c8"/></linearGradient></defs><rect width="305" height="102" fill="url(#b1)"/><text x="77" y="62" font-size="42" fill="#000" textLength="152">火曜会</text><text x="96" y="82" font-size="12" font-weight="700" fill="#111" textLength="54" lengthAdjust="spacingAndGlyphs">KAYOUKAI</text><text x="154" y="82" font-size="12" font-weight="700" fill="#e60033" textLength="55" lengthAdjust="spacingAndGlyphs">radio.or.jp</text></svg>

<svg class="ban" style="left:332px;top:4183px" viewBox="0 0 305 102"><rect width="305" height="102" fill="#fff"/><path d="M0 0h195L100 102H0z" fill="#ecdcc0"/><path d="M0 0h30v20H0zM40 0h40v18H40z" fill="#e84e3c"/><path d="M110 0h30l10 30-20 10z" fill="#f5d63d"/><circle cx="75" cy="40" r="22" fill="#4db24c"/><circle cx="18" cy="65" r="20" fill="#f5d63d"/><circle cx="65" cy="88" r="22" fill="#58a9e8"/><circle cx="75" cy="40" r="7" fill="#ecdcc0"/><text x="176" y="50" font-size="22" font-weight="700" fill="#d8424b" textLength="64" lengthAdjust="spacingAndGlyphs">ちびっこ</text><text x="112" y="73" font-size="19" font-weight="700" fill="#d8424b" textLength="190" lengthAdjust="spacingAndGlyphs">イングリッシュコンテスト</text></svg>

<svg class="ban" style="left:664px;top:4183px" viewBox="0 0 305 102"><rect width="305" height="102" fill="#fff"/><circle cx="22" cy="38" r="9" fill="none" stroke="#1e6ea8" stroke-width="3"/><text x="40" y="32" font-size="14" fill="#1e6ea8" textLength="16">日本</text><text x="40" y="48" font-size="14" fill="#1e6ea8" textLength="16">財団</text><text x="12" y="62" font-size="8" fill="#1e6ea8" textLength="46" lengthAdjust="spacingAndGlyphs">THE NIPPON</text><text x="12" y="72" font-size="8" fill="#1e6ea8" textLength="46" lengthAdjust="spacingAndGlyphs">FOUNDATION</text><text x="63" y="62" font-size="30" font-weight="500" fill="#0c5f95" textLength="116" lengthAdjust="spacingAndGlyphs">海と日本</text><text x="108" y="74" font-size="12" fill="#0c5f95" textLength="72" lengthAdjust="spacingAndGlyphs">PROJECT</text><text x="188" y="72" font-size="28" fill="#0c5f95">in</text><text x="214" y="70" font-size="40" font-weight="500" fill="#1a6fa8" textLength="82" lengthAdjust="spacingAndGlyphs">京都</text></svg>

<svg class="ban" style="left:995px;top:4183px" viewBox="0 0 305 102"><defs><linearGradient id="b4" x1="0" y1="0" x2="1" y2="0"><stop offset="0" stop-color="#2a6fd8"/><stop offset="1" stop-color="#7db4ee"/></linearGradient></defs><rect width="305" height="102" fill="url(#b4)"/><rect y="90" width="305" height="12" fill="#5e8f3e"/><path d="M210 90l10-50 14-10 12 20 10 36zM255 92l6-30 12-8 8 16 6 24z" fill="#2a3356"/><circle cx="228" cy="26" r="8" fill="#332"/><circle cx="268" cy="48" r="7" fill="#332"/><text x="10" y="22" font-size="15" font-weight="700" fill="#fde9a0" textLength="44" lengthAdjust="spacingAndGlyphs">第14回</text><text x="10" y="47" font-size="20" font-weight="700" fill="#ffe55c" stroke="#0c3c80" stroke-width=".4" textLength="68" lengthAdjust="spacingAndGlyphs">自転車</text><circle cx="96" cy="38" r="6" fill="none" stroke="#fff" stroke-width="2"/><circle cx="110" cy="38" r="6" fill="none" stroke="#fff" stroke-width="2"/><text x="122" y="47" font-size="20" font-weight="700" fill="#ffe55c" stroke="#0c3c80" stroke-width=".4" textLength="75" lengthAdjust="spacingAndGlyphs">交通安全</text><rect x="10" y="58" width="32" height="22" fill="#fff" stroke="#143f8f" stroke-width="2"/><text x="14" y="74" font-size="15" font-weight="700" fill="#143f8f">CM</text><text x="46" y="82" font-size="30" font-weight="700" fill="#fff" stroke="#143f8f" stroke-width="1" textLength="146" lengthAdjust="spacingAndGlyphs">コンテスト</text></svg>

<svg class="ban" style="left:0;top:4312px" viewBox="0 0 305 102"><rect width="305" height="102" fill="#f2e6f2"/><circle cx="25" cy="44" r="16" fill="none" stroke="#80245f" stroke-width="6" stroke-dasharray="6 3"/><circle cx="25" cy="44" r="5" fill="#80245f"/><text x="46" y="53" font-size="26" fill="#80245f" textLength="250" lengthAdjust="spacingAndGlyphs">きょうと危機管理 WEB</text><text x="55" y="70" font-size="14" fill="#80245f" textLength="230" lengthAdjust="spacingAndGlyphs">京都府危機管理・防災情報ポータルサイト</text></svg>

<svg class="ban" style="left:332px;top:4312px" viewBox="0 0 305 102"><rect width="305" height="102" fill="#ffe000"/><rect x="8" y="18" width="24" height="24" rx="4" fill="none" stroke="#222" stroke-width="2"/><text x="11" y="35" font-size="10" font-weight="700" fill="#222">JBA</text><text x="38" y="30" font-size="12" fill="#222" textLength="78" lengthAdjust="spacingAndGlyphs">日本民間放送連盟</text><text x="130" y="30" font-size="14" font-weight="700" fill="#e60033">違法だよ!</text><text x="192" y="26" font-size="11" fill="#222" textLength="106" lengthAdjust="spacingAndGlyphs">放送番組の違法配信撲滅</text><text x="245" y="40" font-size="11" fill="#222" textLength="54" lengthAdjust="spacingAndGlyphs">キャンペーン</text><circle cx="56" cy="60" r="24" fill="#fff" stroke="#222"/><path d="M30 54c2-20 50-20 52 0z" fill="#fff" stroke="#222"/><text x="84" y="84" font-size="46" font-weight="700" fill="#0b8fd9" textLength="142" lengthAdjust="spacingAndGlyphs">あげるくん</text><ellipse cx="260" cy="72" rx="22" ry="22" fill="#e3a11f" stroke="#222"/><path d="M238 52l6-12 36-4 4 14z" fill="#1b4da0"/></svg>

<svg class="ban" style="left:664px;top:4312px" viewBox="0 0 305 102"><rect width="305" height="102" fill="#fff"/><path d="M0 60c20-10 50-6 56 20l30 22H0z" fill="#f28d96"/><path d="M0 0h50L20 30H0z" fill="#c7d9ee"/><circle cx="30" cy="6" r="14" fill="#f28d96"/><path d="M210 0h95v50c-30 10-60 6-70-20z" fill="#9fc2e3"/><circle cx="240" cy="70" r="16" fill="#f28d96"/><path d="M270 60l35-8v50h-50z" fill="#eee"/><text x="92" y="38" font-size="27" font-weight="700" fill="#d71c2c" textLength="34" style="font-family:'Noto Serif CJK SC',serif">関</text><text x="126" y="38" font-size="24" font-weight="700" fill="#1a6fb5" style="font-family:'Noto Serif CJK SC',serif">西</text><text x="152" y="36" font-size="18" font-weight="700" fill="#222" textLength="56" lengthAdjust="spacingAndGlyphs">ラジオ</text><text x="84" y="78" font-size="30" font-weight="700" fill="#f2b211" textLength="36" lengthAdjust="spacingAndGlyphs">12</text><text x="122" y="72" font-size="12" fill="#222">局の</text><text x="132" y="60" font-size="24" font-weight="700" fill="#d71c2c">街</text><text x="146" y="84" font-size="20" font-weight="700" fill="#d71c2c">歩</text><text x="186" y="64" font-size="18" font-weight="700" fill="#d71c2c" textLength="36">音声</text><text x="178" y="84" font-size="15" fill="#222" textLength="44">ガイド</text><text x="92" y="98" font-size="9" font-weight="700" fill="#222" textLength="122" lengthAdjust="spacingAndGlyphs">～大阪・関西万博まで、歩いて～</text></svg>

<!-- footer links -->
<div class="a" style="left:0;top:4496px;width:1300px;height:413px;background:#0c4a75"></div>
<div class="fh" style="left:0">企業情報</div>
<div class="fh" style="left:325px">放送基準</div>
<div class="fh" style="left:650px">京都コンテンツ</div>
<div class="fh" style="left:975px">関連サイト</div>
<div class="fl" style="left:0"></div><div class="fl" style="left:325px"></div><div class="fl" style="left:650px"></div><div class="fl" style="left:975px"></div>
<div class="fc" style="left:0"><p style="margin-top:2px">会社概要</p><p>採用情報</p><p>後援名義使用申請</p><p>一般事業主行動計画</p><p>お問い合わせ</p></div>
<div class="fc" style="left:325px"><p style="margin-top:2px">放送基準</p><p>番組審議会</p><p>個人情報について</p><p>特定個人情報の適正な取り扱いに関する基本<br>方針(マイナンバー)</p><p>青少年のためのテレビ番組</p><p>著作権・リンクについて</p><p>テレビ放送番組の編集に関する基本計画</p><p>ラジオ放送番組の編集に関する基本計画</p></div>
<div class="fc" style="left:650px"><p style="margin-top:2px">祇園祭</p><p>五山送り火</p><p>KBS京都アナウンサーサイト</p><p>全国高校野球選手権 京都大会速報</p><p>京都少年サッカー選手権大会</p><p>京都高校サッカー情報</p><p>全国高等学校ラグビーフットボール大会 京都<br>府予選</p><p>京都マラソン</p><p>天皇盃 全国車いす駅伝競走大会</p></div>
<div class="fc" style="left:975px"><p style="margin-top:2px">KBSホール</p><p>チケットインフォメーション</p><p>KBSプロジェクト</p><p>KBSカルチャー</p><p>きょうとくらす</p></div>

<!-- bottom -->
<svg class="a" style="left:351px;top:4942px" width="140" height="36"><text x="2" y="30" style="font-family:'Liberation Serif',serif" font-size="36" font-weight="700" fill="#0c71b9" textLength="66" lengthAdjust="spacingAndGlyphs">KBS</text><text x="70" y="29" font-size="32" font-weight="700" fill="#0c71b9" textLength="65" lengthAdjust="spacingAndGlyphs">京都</text></svg>
<div class="a" style="left:525px;top:4939px;width:1px;height:40px;background:#0c71b9"></div>
<div class="a" style="left:565px;top:4941px;line-height:20px;font-size:11.500px;color:#888">当ホームページ掲載の記事、写真、イラスト等の無断掲載を禁じます。</div>
<div class="a" style="left:565px;top:4959px;line-height:18px;font-size:10.500px;color:#888">Copyright © Kyoto Broadcasting System Company Limited. All Rights Reserved</div>
</body></html>
